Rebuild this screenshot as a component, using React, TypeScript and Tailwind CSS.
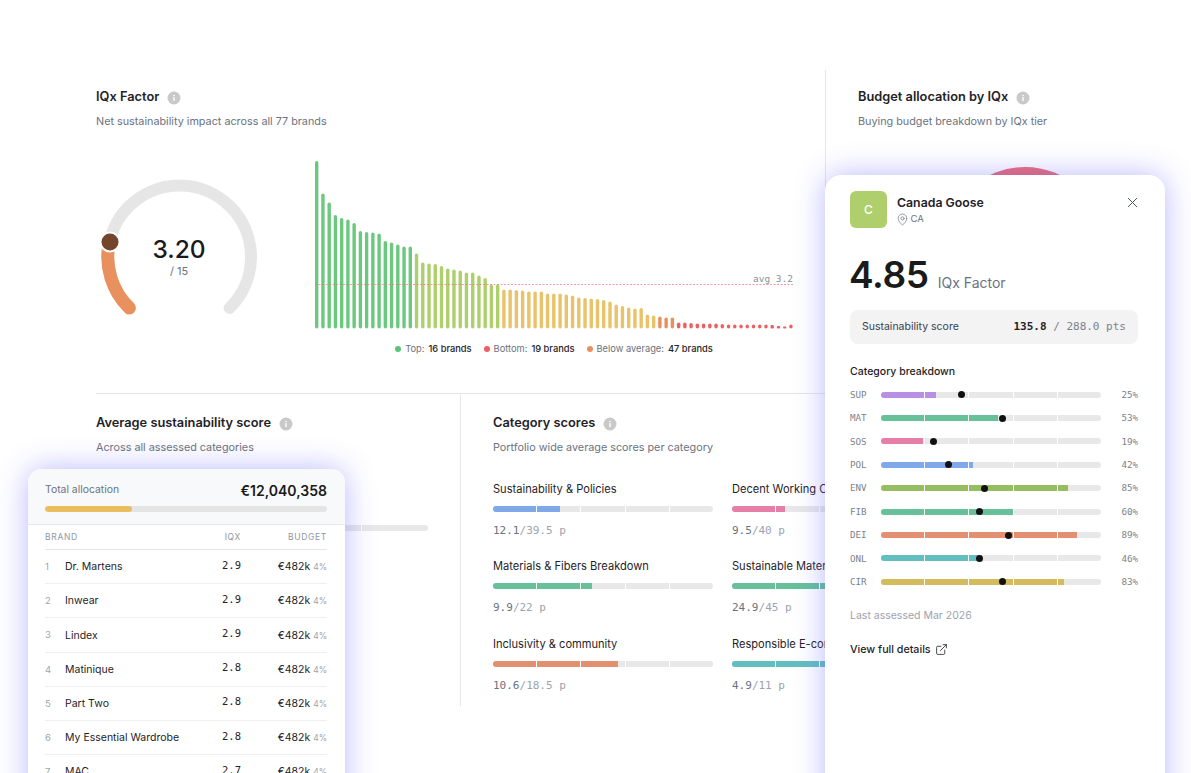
import { ExternalLink, MapPin, X } from 'lucide-react';

const barHeights = [
  167.5, 135, 126, 113.5, 110.5, 109, 105.5, 97.5, 96.5, 96, 95, 87.5, 86, 84, 82, 82, 75, 66, 65, 64.5, 62.5, 60, 59, 58,
  56, 56, 53, 50.5, 44, 44, 39, 39, 38.5, 38, 37, 37, 37, 35, 35, 35, 34, 33, 31, 30.5, 30, 29.5, 28.5, 27, 24, 22.5, 21,
  20, 20.5, 14, 13, 12, 11, 11, 6, 6, 5.5, 5, 5, 5, 5, 4.5, 4, 4, 4, 4, 4, 4, 4, 3.5, 2.5, 2, 4,
];

function barColor(i: number) {
  if (i < 16) return '#6CC87F';
  if (i < 30) return '#AED06C';
  if (i < 55) return '#E9C26A';
  if (i < 58) return '#E9905F';
  return '#EE5F5F';
}

const breakdown = [
  { code: 'SUP', pct: 25, dot: 36.4, color: '#B98FE3' },
  { code: 'MAT', pct: 53, dot: 55.1, color: '#66C09A' },
  { code: 'SOS', pct: 19, dot: 23.8, color: '#E57FA8' },
  { code: 'POL', pct: 42, dot: 30.6, color: '#7FA9E8' },
  { code: 'ENV', pct: 85, dot: 46.9, color: '#96BE60' },
  { code: 'FIB', pct: 60, dot: 44.8, color: '#66C09A' },
  { code: 'DEI', pct: 89, dot: 57.8, color: '#E28F72' },
  { code: 'ONL', pct: 46, dot: 44.8, color: '#62BFBF' },
  { code: 'CIR', pct: 83, dot: 55, color: '#D4BC5C' },
];

const categories = [
  { name: 'Sustainability & Policies', score: '12.1', max: '39.5', pct: 30.6, color: '#7FA9E8' },
  { name: 'Decent Working Conditions', score: '9.5', max: '40', pct: 24, color: '#E57FA8' },
  { name: 'Materials & Fibers Breakdown', score: '9.9', max: '22', pct: 45, color: '#66C09A' },
  { name: 'Sustainable Materials', score: '24.9', max: '45', pct: 55, color: '#66C09A' },
  { name: 'Inclusivity & community', score: '10.6', max: '18.5', pct: 57, color: '#E28F72' },
  { name: 'Responsible E-commerce', score: '4.9', max: '11', pct: 45, color: '#62BFBF' },
];

const brands = [
  { name: 'Dr. Martens', iqx: '2.9' },
  { name: 'Inwear', iqx: '2.9' },
  { name: 'Lindex', iqx: '2.9' },
  { name: 'Matinique', iqx: '2.8' },
  { name: 'Part Two', iqx: '2.8' },
  { name: 'My Essential Wardrobe', iqx: '2.8' },
  { name: 'MAC', iqx: '2.7' },
];

function InfoDot() {
  return (
    <svg width="14" height="14" viewBox="0 0 14 14" className="shrink-0">
      <circle cx="7" cy="7" r="6.5" fill="#C9C9C9" />
      <circle cx="7" cy="4.5" r="0.8" fill="#fff" />
      <rect x="6.3" y="6" width="1.4" height="4" rx="0.5" fill="#fff" />
    </svg>
  );
}

function SectionTitle({ title, sub }: { title: string; sub: string }) {
  return (
    <div>
      <div className="flex items-center gap-[8px] h-[16px] pt-[1px]">
        <h2 className="text-[12.8px] font-semibold text-[#1f2328] leading-none">{title}</h2>
        <InfoDot />
      </div>
      <p className="mt-[9px] text-[10.8px] leading-[16px] text-[#6B7280]">{sub}</p>
    </div>
  );
}

function SegmentBar({ pct, color }: { pct: number; color?: string }) {
  return (
    <div className="relative h-[6px] w-full rounded-full overflow-hidden bg-[#E8E8E8]">
      {color && <div className="absolute inset-y-0 left-0" style={{ width: `${pct}%`, background: color }} />}
      <div className="absolute inset-0 flex">
        <div className="flex-1 border-r border-white" />
        <div className="flex-1 border-r border-white" />
        <div className="flex-1 border-r border-white" />
        <div className="flex-1 border-r border-white" />
        <div className="flex-1" />
      </div>
    </div>
  );
}

function Gauge() {
  return (
    <div className="relative w-[166px] h-[150px] mt-[40px] shrink-0">
      <svg width="166" height="150" viewBox="0 0 166 150">
        <path
          d="M 33.4 138 A 71.5 71.5 0 1 1 133.6 138"
          fill="none"
          stroke="#E6E6E6"
          strokeWidth="12"
          strokeLinecap="round"
        />
        <path
          d="M 33.4 138 A 71.5 71.5 0 0 1 13.3 72"
          fill="none"
          stroke="#E8905E"
          strokeWidth="13"
          strokeLinecap="round"
        />
        <circle cx="14" cy="72" r="10.5" fill="#fff" />
        <circle cx="14" cy="72" r="8.5" fill="#75452B" />
      </svg>
      <div className="absolute left-0 right-0 top-[64px] flex flex-col items-center">
        <span className="text-[24.5px] leading-[30px] font-medium text-[#1a1a1a]">3.20</span>
        <span className="text-[11px] leading-[14px] text-[#6B7280]">/ 15</span>
      </div>
    </div>
  );
}

function BarChart() {
  return (
    <svg width="478" height="175" viewBox="0 0 478 175" className="block">
      {barHeights.map((h, i) => (
        <rect
          key={i}
          x={i * 6.24}
          y={173.5 - h}
          width="3.4"
          height={h}
          rx={h < 4 ? 1 : 1.7}
          fill={barColor(i)}
        />
      ))}
      <line x1="0" x2="478" y1="129.5" y2="129.5" stroke="#EE6B6B" strokeOpacity="0.65" strokeWidth="1" strokeDasharray="2 1.5" />
      <text
        x="478"
        y="126.5"
        textAnchor="end"
        fill="#8A8F96"
        className="font-['DejaVu_Sans_Mono',monospace] text-[9.5px]"
      >
        avg 3.2
      </text>
    </svg>
  );
}

function Legend({ color, label, value }: { color: string; label: string; value: string }) {
  return (
    <div className="flex items-center gap-[4px] text-[9.3px] leading-none">
      <span className="size-[6px] rounded-full" style={{ background: color }} />
      <span className="text-[#6B7280]">{label}</span>
      <span className="font-medium text-[#1f2328]">{value}</span>
    </div>
  );
}

function BudgetCard() {
  return (
    <div className="absolute left-[28px] top-[469px] w-[317px] h-[400px] rounded-t-[14px] overflow-hidden bg-white shadow-[0_0_30px_rgba(100,100,255,0.45)]">
      <div className="h-[56px] bg-[#F8F9FA] border-b border-[#E5E7EB] px-[17px] pr-[18px] pt-[12px]">
        <div className="flex items-center justify-between h-[18px]">
          <span className="text-[10.4px] text-[#6B7280]">Total allocation</span>
          <span className="text-[14px] font-semibold text-[#1a1a1a]">€12,040,358</span>
        </div>
        <div className="mt-[7px] h-[6px] rounded-full overflow-hidden bg-[#E5E5E5]">
          <div className="h-full w-[31%] rounded-full bg-[#E8BE60]" />
        </div>
      </div>
      <div className="pl-[17px] pr-[18px]">
        <div className="grid grid-cols-[20px_1fr_auto_86px] items-center h-[25px] border-b border-[#E5E7EB] text-[8.5px] tracking-[0.08em] text-[#8F96A1]">
          <span className="col-span-2">BRAND</span>
          <span className="text-right">IQX</span>
          <span className="text-right">BUDGET</span>
        </div>
        {brands.map((b, i) => (
          <div
            key={b.name}
            className="grid grid-cols-[20px_1fr_auto_86px] items-center h-[34.2px] pt-[1px] border-b border-[#EEEFF1]"
          >
            <span className="text-[9.5px] text-[#9CA3AF]">{i + 1}</span>
            <span className="text-[10.5px] text-[#1f2328]">{b.name}</span>
            <span className="font-['DejaVu_Sans_Mono',monospace] text-[10.5px] text-[#1f2328] -mt-[3px]">{b.iqx}</span>
            <span className="text-right text-[10.5px] text-[#1f2328]">
              €482k <span className="text-[8.5px] text-[#9CA3AF]">4%</span>
            </span>
          </div>
        ))}
      </div>
    </div>
  );
}

function BrandCard() {
  return (
    <div className="absolute left-[825px] top-[175px] w-[340px] h-[680px] rounded-t-[16px] bg-white shadow-[0_0_30px_rgba(100,100,255,0.45)] pl-[25px] pr-[27px] pt-[16px]">
      <div className="flex items-start">
        <div className="size-[37px] rounded-[6px] bg-[#AECF6B] flex items-center justify-center text-[12px] font-medium text-white">
          C
        </div>
        <div className="ml-[10px] flex-1">
          <div className="text-[12.3px] leading-[18px] mt-[3px] font-semibold text-[#1f2328]">Canada Goose</div>
          <div className="flex items-center gap-[2px] text-[9.5px] leading-[14px] text-[#6B7280]">
            <MapPin size={13} strokeWidth={1.3} className="-ml-[1.5px]" />
            CA
          </div>
        </div>
        <X size={17} strokeWidth={1.4} className="mt-[3px] -mr-[3px] text-[#4B5563]" />
      </div>

      <div className="mt-[24px] flex items-baseline">
        <span className="-ml-[1px] text-[37px] leading-[46px] font-semibold tracking-[-0.01em] text-[#1a1a1a]">4.85</span>
        <span className="ml-[9px] text-[14px] text-[#6B7280]">IQx Factor</span>
      </div>

      <div className="mt-[12px] h-[34px] rounded-[8px] bg-[#F3F3F3] px-[12px] flex items-center justify-between">
        <span className="text-[10.5px] text-[#374151]">Sustainability score</span>
        <span className="font-['DejaVu_Sans_Mono',monospace] text-[11px] text-[#7B828C]">
          <span className="font-semibold text-[#1f2328]">135.8</span> / 288.0 pts
        </span>
      </div>

      <div className="mt-[21px] text-[10.5px] leading-[14px] font-medium text-[#1f2328]">Category breakdown</div>

      <div className="mt-[4px] flex flex-col">
        {breakdown.map((row) => (
          <div key={row.code} className="flex items-center h-[23.4px] font-['DejaVu_Sans_Mono',monospace] text-[9.2px] text-[#7B828C]">
            <span className="w-[31px] shrink-0">{row.code}</span>
            <div className="relative w-[220px] shrink-0">
              <SegmentBar pct={row.pct} color={row.color} />
              <span
                className="absolute top-[-0.5px] size-[7px] -ml-[3.5px] rounded-full bg-[#111]"
                style={{ left: `${row.dot}%` }}
              />
            </div>
            <span className="flex-1 text-right">{row.pct}%</span>
          </div>
        ))}
      </div>

      <div className="mt-[14px] text-[10.5px] leading-[16px] text-[#9CA3AF]">Last assessed Mar 2026</div>
      <div className="mt-[18px] flex items-center gap-[4px] text-[10.7px] leading-[16px] font-medium text-[#1f2328]">
        View full details
        <ExternalLink size={13} strokeWidth={1.5} />
      </div>
    </div>
  );
}

export default function App() {
  return (
    <div className="relative h-[773px] overflow-hidden bg-white font-['Inter',sans-serif]">
      <div className="flex pt-[70px] h-full">
        <div className="w-[826px] shrink-0 border-r border-[#E5E7EB]">
          <div className="ml-[96px] mr-[-1px] h-[324px] border-b border-[#E5E7EB] pt-[19px]">
            <SectionTitle title="IQx Factor" sub="Net sustainability impact across all 77 brands" />
            <div className="flex">
              <Gauge />
              <div className="ml-[53px] mt-[25px] w-[478px] shrink-0">
                <BarChart />
                <div className="mt-[14px] flex justify-center gap-[12px]">
                  <Legend color="#58C47A" label="Top:" value="16 brands" />
                  <Legend color="#EE5F5F" label="Bottom:" value="19 brands" />
                  <Legend color="#E9905F" label="Below average:" value="47 brands" />
                </div>
              </div>
            </div>
          </div>

          <div className="flex h-[312px]">
            <div className="ml-[96px] w-[365px] shrink-0 border-r border-[#E5E7EB] pt-[21px]">
              <SectionTitle title="Average sustainability score" sub="Across all assessed categories" />
              <div className="mt-[69px] w-[332px]">
                <SegmentBar pct={0} />
              </div>
            </div>
            <div className="pl-[32px] pt-[21px]">
              <SectionTitle title="Category scores" sub="Portfolio wide average scores per category" />
              <div className="mt-[25px] grid grid-cols-[220px_220px] gap-x-[19px]">
                {categories.map((c) => (
                  <div key={c.name} className="h-[77.3px]">
                    <div className="text-[11.1px] leading-[16px] text-[#1f2328] whitespace-nowrap">{c.name}</div>
                    <div className="mt-[9px]">
                      <SegmentBar pct={c.pct} color={c.color} />
                    </div>
                    <div className="mt-[11px] font-['DejaVu_Sans_Mono',monospace] text-[11px] leading-[16px] text-[#9CA3AF]">
                      <span className="text-[#6B7280]">{c.score}</span>/{c.max} p
                    </div>
                  </div>
                ))}
              </div>
            </div>
          </div>
        </div>

        <div className="pl-[32px] pt-[19px] flex-1">
          <SectionTitle title="Budget allocation by IQx" sub="Buying budget breakdown by IQx tier" />
          <svg width="160" height="160" viewBox="0 0 160 160" className="mt-[37px] ml-[87px]">
            <circle cx="80" cy="80" r="66" fill="none" stroke="#EC6C72" strokeWidth="28" />
          </svg>
        </div>
      </div>

      <BudgetCard />
      <BrandCard />
    </div>
  );
}
